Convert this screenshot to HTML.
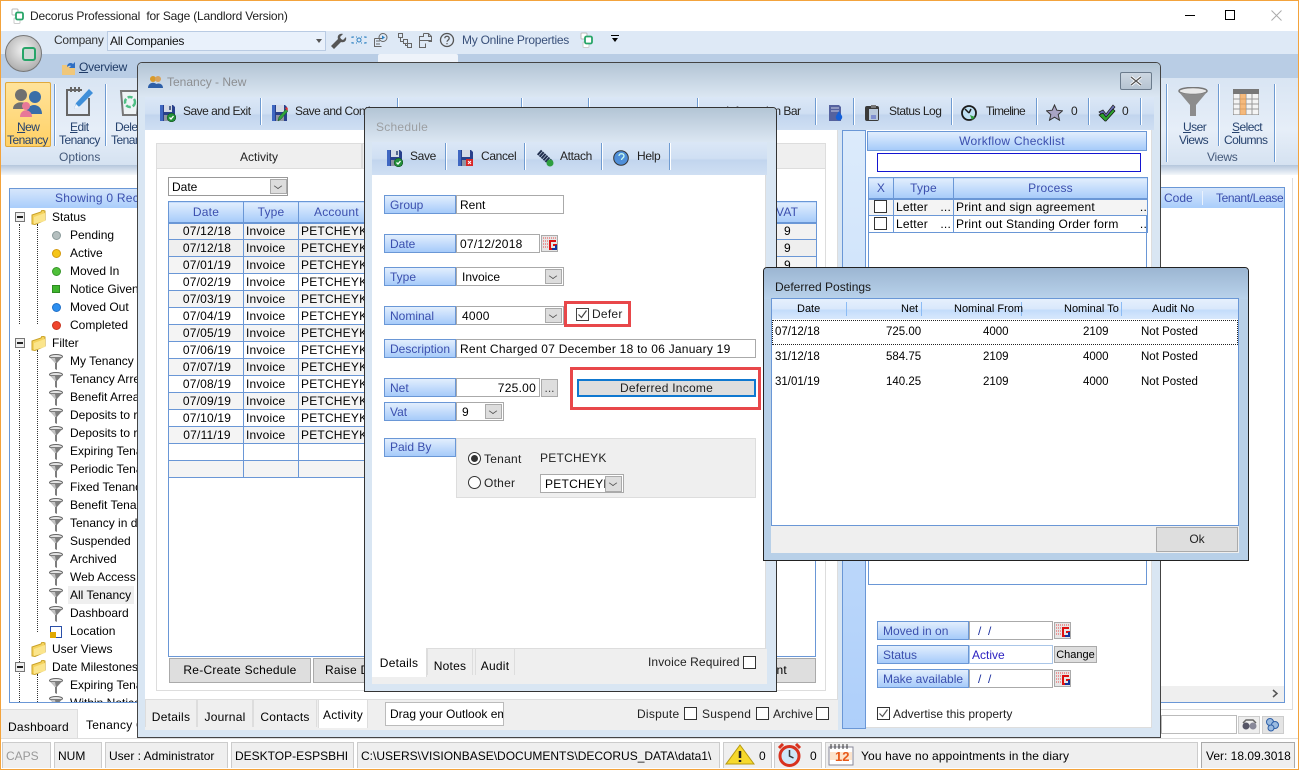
<!DOCTYPE html>
<html><head><meta charset="utf-8"><title>Decorus</title>
<style>
html,body{margin:0;padding:0;width:1299px;height:770px;overflow:hidden;background:#fff}
body{position:relative;font:12px/14px "Liberation Sans",sans-serif;color:#000}
div,span.a,svg.a,table.a{position:absolute;box-sizing:border-box}
.t{position:absolute;white-space:nowrap;line-height:14px}
.lb{position:absolute;box-sizing:border-box;height:19px;background:linear-gradient(#e2eefd,#a6cbfa);border:1px solid #6a97d6;color:#3b4fae;padding-left:5px;line-height:18px;white-space:nowrap;overflow:hidden}
.in{position:absolute;box-sizing:border-box;height:19px;background:#fff;border:1px solid #aaa;padding-left:3px;line-height:18px;white-space:nowrap;overflow:hidden}
.dd{position:absolute;box-sizing:border-box;width:17px;height:15px;background:#ddd;border:1px solid #aaa}
.dd:after{content:"";position:absolute;left:4px;top:3px;width:5px;height:5px;border-right:1px solid #555;border-bottom:1px solid #555;transform:scaleY(.7) rotate(45deg)}
.cb{position:absolute;box-sizing:border-box;width:13px;height:13px;background:#fff;border:1px solid #333}
.btn{position:absolute;box-sizing:border-box;background:#dedede;border:1px solid #aaa;text-align:center;white-space:nowrap;overflow:hidden}
.sep{position:absolute;width:1px;background:#6f9bd1;box-shadow:1px 0 0 #fff}
.tab{position:absolute;box-sizing:border-box;background:#efefef;border:1px solid #ddd;border-bottom:0;text-align:center;white-space:nowrap}
table.g{border-collapse:collapse;table-layout:fixed;font:12px/14px "Liberation Sans",sans-serif;letter-spacing:.2px}
table.g td{border:1px solid #6a97d6;height:16px;padding:0 0 0 2px;white-space:nowrap;overflow:hidden;box-sizing:border-box}
table.g th{border:1px solid #6a97d6;border-bottom-width:2px;background:linear-gradient(#e2eefd,#a6cbfa);font-weight:normal;color:#3b4fae;padding:0;box-sizing:border-box}
.s{letter-spacing:.25px}
.n{letter-spacing:0}
.tree .s{letter-spacing:0}
.q{letter-spacing:-.25px}
.r{letter-spacing:-.55px}
.b{letter-spacing:-.5px}
.c{letter-spacing:-.35px}
</style></head><body>
<svg width="0" height="0" style="position:absolute"><defs>
<symbol id="fun" viewBox="0 0 14 16"><ellipse cx="7" cy="2.5" rx="6.5" ry="2" fill="#e4e4e4" stroke="#666"/><path d="M.7 3 6 9v6l2 1V9l5.3-6z" fill="#7d7d7d"/><path d="M2 4h4l1 5H6z" fill="#c4c4c4"/></symbol>
<symbol id="fol" viewBox="0 0 15 15"><path d="M1 5l9-3 1-2 3 1v9l-10 4.5L1 14z" fill="#f5d35e" stroke="#c9a227"/><path d="M3 7l11-4v8L3 14z" fill="#fbe58c"/></symbol>
<symbol id="log" viewBox="0 0 15 16"><rect x="1" y="1" width="6" height="6" rx="1" fill="#fff" stroke="#bbb"/><rect x="3" y="10" width="6" height="5.500" rx="1" fill="#fff" stroke="#ccc"/><rect x="5" y="4.500" width="7" height="7" rx="1.500" fill="#fff" stroke="#27a568" stroke-width="1.800"/></symbol>
<symbol id="flo" viewBox="0 0 16 18"><path d="M0 1h13l2 2v14H0z" fill="#28408c"/><rect x="0" y="1" width="3" height="16" fill="#3f67c2"/><rect x="4" y="1" width="8" height="7" fill="#d4dae6"/><rect x="9" y="2" width="2" height="4" fill="#55678f"/><rect x="4" y="11" width="8" height="6" fill="#8f95a3"/><circle cx="11.500" cy="13.500" r="4.300" fill="#23903a" stroke="#14511f" stroke-width=".6"/><path d="M9.500 13.500l1.500 1.500 2.500-3" fill="none" stroke="#fff" stroke-width="1.300"/></symbol>
<symbol id="flp" viewBox="0 0 16 18"><path d="M0 1h13l2 2v14H0z" fill="#28408c"/><rect x="0" y="1" width="3" height="16" fill="#3f67c2"/><rect x="4" y="1" width="8" height="7" fill="#d4dae6"/><rect x="4" y="11" width="8" height="6" fill="#8f95a3"/><path d="M6 17l1-4 7-8 2 2-7 8z" fill="#2ea33c" stroke="#14511f" stroke-width=".5"/><path d="M13 4l2-1 1 2-1 2z" fill="#d33"/></symbol>
<symbol id="flx" viewBox="0 0 16 18"><path d="M0 1h13l2 2v14H0z" fill="#28408c"/><rect x="0" y="1" width="3" height="16" fill="#3f67c2"/><rect x="4" y="1" width="8" height="7" fill="#d4dae6"/><rect x="4" y="11" width="8" height="6" fill="#8f95a3"/><rect x="8" y="10" width="7" height="7" fill="#d92626"/><path d="M10 12l3 3m0-3l-3 3" stroke="#fff"/></symbol>
<symbol id="cal" viewBox="0 0 17 17"><rect x=".5" y=".5" width="16" height="16" fill="#e6e6e6" stroke="#aaa"/><path d="M2 3h13M2 6h6M2 9h5M2 12h5" stroke="#e44" stroke-dasharray="1 1"/><path d="M15 6H9v8h6v-4h-3" fill="none" stroke="#d11" stroke-width="2"/><path d="M11 14h4V10" fill="none" stroke="#13359c" stroke-width="2"/></symbol>
</defs></svg>

<!-- app chrome -->
<div style="left:0;top:0;width:1299px;height:770px;border:1px solid #f3a33c"></div>
<svg class="a" style="left:11px;top:8px" width="15" height="16"><use href="#log"/></svg>
<span class="t" style="left:30px;top:9px;color:#222;letter-spacing:-.2px">Decorus Professional&nbsp; for Sage (Landlord Version)</span>
<div style="left:1185px;top:15px;width:10px;height:1px;background:#000"></div>
<div style="left:1225px;top:10px;width:10px;height:10px;border:1px solid #000"></div>
<svg class="a" style="left:1271px;top:10px" width="11" height="11"><path d="M.5.5l10 10m0-10l-10 10" stroke="#aaa"/></svg>

<div style="left:1px;top:31px;width:1297px;height:23px;background:#dee9f6"></div>
<div style="left:1px;top:54px;width:1297px;height:24px;background:#b9cde5"></div>
<div style="left:1px;top:78px;width:1297px;height:87px;background:linear-gradient(#d9e5f3,#e6eef8 60%,#d5e2f1)"></div>
<div style="left:1px;top:165px;width:1297px;height:10px;background:linear-gradient(#b4c6dc,#f4f7fb)"></div>
<div style="left:378px;top:54px;width:80px;height:10px;background:#eef3fa;border-radius:2px 2px 0 0"></div>

<div style="left:5px;top:35px;width:37px;height:37px;border-radius:50%;background:radial-gradient(circle at 50% 40%,#f2f2f2,#b5b5b5 70%,#888);border:1px solid #777"></div>
<div style="left:22px;top:47px;width:14px;height:14px;border:2.500px solid #27a568;border-radius:3px;background:#cfd8d4"></div>
<span class="t q" style="left:54px;top:33px;color:#333">Company</span>
<div class="q" style="left:107px;top:31px;width:219px;height:20px;background:#e9f1fb;border:1px solid #b9cbe3;line-height:18px;padding-left:2px;color:#111">All Companies</div>
<div style="left:316px;top:39px;width:0;height:0;border:3px solid transparent;border-top:4px solid #555"></div>
<svg class="a" style="left:330px;top:32px" width="126" height="18" fill="none" stroke="#666"><path d="M1 14l7-7c-1-3 1-6 5-5l-3 3 1 2 2 1 3-3c1 4-2 6-5 5l-7 7z" fill="#555" stroke="none"/><path d="M22 6v-1h2M22 10v1h2M36 6v-1h-2M36 10v1h-2" stroke="#2a7fc0"/><circle cx="29" cy="8" r="2" stroke="#2a7fc0"/><path d="M26 5h1m4 0h1M26 11h1m4 0h1" stroke="#2a7fc0"/><path d="M44.500 6.500h8M44.500 6.500v8h7M46 9h4M46 12h4"/><circle cx="53" cy="5.500" r="4"/><path d="M52 3.500l3 2-3 2" fill="#2a7fc0" stroke="none"/><path d="M68.500 1.500h4v4h-4zM73.500 7.500h4v4h-4zM77.500 11.500h4v4h-4zM70.500 5.500v4h3M75.500 11.500v2h2"/><path d="M93.500 1.500h5l3 3v5h-3M93.500 1.500v3h-4v11h6v-4M89.500 8.500h12M98.500 1.500v3h3"/><circle cx="117" cy="8" r="6.500" stroke="#555" stroke-width="1.300"/><path d="M114.800 6.300c0-2.700 4.400-2.700 4.400 0 0 1.800-2.200 1.800-2.200 3.500m0 1.300v1.200" stroke="#555" stroke-width="1.300"/></svg>
<span class="t q" style="left:462px;top:33px;color:#39507a">My Online Properties</span>
<svg class="a" style="left:580px;top:32px" width="15" height="16"><use href="#log"/></svg>
<div style="left:611px;top:35px;width:8px;height:1px;background:#000"></div>
<div style="left:612px;top:38px;width:0;height:0;border:3px solid transparent;border-top:4px solid #000"></div>

<svg class="a" style="left:61px;top:60px" width="15" height="15"><path d="M1 5h5l2 2h6v8H1z" fill="#f0c77a"/><path d="M6 7c0-4 4-5 6-3l2-2v6H8l2-2c-1-1-3 0-4 1z" fill="#2f6fc4"/></svg>
<span class="t q" style="left:79px;top:60px;color:#1e3a66"><u>O</u>verview</span>

<!-- ribbon options -->
<div style="left:5px;top:82px;width:46px;height:65px;background:linear-gradient(#ffe39b,#ffd166);border:1px solid #e0a93c;border-radius:2px"></div>
<svg class="a" style="left:12px;top:86px" width="32" height="32"><circle cx="9" cy="9" r="6" fill="#707070"/><path d="M1 23c0-9 16-9 16 0z" fill="#707070"/><circle cx="23" cy="11" r="6" fill="#3a6ea8"/><path d="M14 28c0-12 16-12 16 0z" fill="#3a6ea8"/><circle cx="14" cy="20" r="4" fill="#e87898"/><path d="M8 31c0-9 12-9 12 0z" fill="#e87898"/></svg>
<span class="t r" style="left:17px;top:120px;color:#26426e"><u>N</u>ew</span>
<span class="t r" style="left:7px;top:133px;color:#26426e">Tenancy</span>
<svg class="a" style="left:65px;top:86px" width="30" height="32"><path d="M17 4H2v25h22V12" fill="none" stroke="#666" stroke-width="2"/><path d="M6 1v5M10 1v5M14 1v5" stroke="#666" stroke-width="2"/><path d="M9 23l2-6L24 3l4 4-13 13z" fill="#3f8fd9"/><path d="M9 23l2-5 3 3z" fill="#f0f4fa"/></svg>
<span class="t r" style="left:70px;top:120px;color:#26426e"><u>E</u>dit</span>
<span class="t r" style="left:59px;top:133px;color:#26426e">Tenancy</span>
<div class="sep" style="left:54px;top:84px;height:62px"></div>
<div class="sep" style="left:105px;top:84px;height:62px"></div>
<svg class="a" style="left:119px;top:88px" width="22" height="30"><path d="M2 3h18l-2 24H4z" fill="#eef3f5" stroke="#777" stroke-width="2"/><circle cx="11" cy="14" r="5" fill="none" stroke="#4fbf85" stroke-width="2.500" stroke-dasharray="5 2"/></svg>
<span class="t r" style="left:115px;top:120px;color:#26426e">Dele</span>
<span class="t r" style="left:111px;top:133px;color:#26426e">Tenan</span>
<span class="t n" style="left:59px;top:150px;color:#44597a">Options</span>

<div class="sep" style="left:1166px;top:84px;height:78px"></div>
<svg class="a" style="left:1178px;top:87px" width="30" height="30"><ellipse cx="15" cy="4" rx="14" ry="3.500" fill="#e8e8e8" stroke="#777" stroke-width="1.500"/><path d="M1 5l11 13v11h6V18L29 5c-6 3-22 3-28 0z" fill="#8c8c8c"/></svg>
<span class="t r" style="left:1183px;top:120px;color:#26426e"><u>U</u>ser</span>
<span class="t r" style="left:1179px;top:133px;color:#26426e">Views</span>
<div class="sep" style="left:1218px;top:84px;height:62px"></div>
<svg class="a" style="left:1233px;top:89px" width="26" height="26"><rect width="26" height="26" fill="#f4f4f4" stroke="#777"/><rect width="26" height="5" fill="#777"/><path d="M7 5v21M13 5v21M19 5v21M0 10h26M0 15h26M0 20h26" stroke="#999"/><rect x="7" y="5" width="6" height="21" fill="#f5a14a" opacity=".7"/></svg>
<span class="t r" style="left:1232px;top:120px;color:#26426e"><u>S</u>elect</span>
<span class="t r" style="left:1224px;top:133px;color:#26426e">Columns</span>
<span class="t q" style="left:1207px;top:150px;color:#44597a">Views</span>
<div class="sep" style="left:1274px;top:84px;height:78px"></div>

<!-- background tree -->
<div class="tree" style="left:9px;top:188px;width:129px;height:515px;border:1px solid #6a97d6;background:#fff;overflow:hidden">
<div style="left:0;top:0;width:127px;height:19px;background:linear-gradient(#d6e6fb,#a9cdfb)"></div>
<span class="t" style="left:45px;top:2px;color:#3b4fae;letter-spacing:.25px">Showing 0 Records</span>
<div style="left:-10px;top:-189px;width:146px;height:710px">
<div style="left:19px;top:224px;width:0;height:100px;border-left:1px dotted #333"></div>
<div style="left:37px;top:224px;width:0;height:100px;border-left:1px dotted #333"></div>
<div style="left:37px;top:350px;width:0;height:282px;border-left:1px dotted #333"></div>
<div style="left:19px;top:350px;width:0;height:360px;border-left:1px dotted #333"></div>
<div style="left:37px;top:674px;width:0;height:30px;border-left:1px dotted #333"></div>

<div style="left:15px;top:212px;width:10px;height:10px;border:1px solid #777;background:#eee"><div style="left:1px;top:3px;width:6px;height:2px;background:#222"></div></div>
<svg class="a" style="left:31px;top:210px" width="15" height="15"><use href="#fol"/></svg><span class="t s" style="left:52px;top:210px">Status</span>
<div style="left:52px;top:231px;width:9px;height:9px;border-radius:50%;background:#b5bfbf;border:1px solid #8a9a9a"></div><span class="t s" style="left:70px;top:228px">Pending</span>
<div style="left:52px;top:249px;width:9px;height:9px;border-radius:50%;background:#f5c518;border:1px solid #d49a10"></div><span class="t s" style="left:70px;top:246px">Active</span>
<div style="left:52px;top:267px;width:9px;height:9px;border-radius:50%;background:#4fc03a;border:1px solid #38962a"></div><span class="t s" style="left:70px;top:264px">Moved In</span>
<div style="left:52px;top:285px;width:8px;height:8px;background:#3fb52d;border:1px solid #2d8a20"></div><span class="t s" style="left:70px;top:282px">Notice Given</span>
<div style="left:52px;top:303px;width:9px;height:9px;border-radius:50%;background:#2d8ff0;border:1px solid #2070c8"></div><span class="t s" style="left:70px;top:300px">Moved Out</span>
<div style="left:52px;top:321px;width:9px;height:9px;border-radius:50%;background:#f0452d;border:1px solid #c83520"></div><span class="t s" style="left:70px;top:318px">Completed</span>

<div style="left:15px;top:338px;width:10px;height:10px;border:1px solid #777;background:#eee"><div style="left:1px;top:3px;width:6px;height:2px;background:#222"></div></div>
<svg class="a" style="left:31px;top:336px" width="15" height="15"><use href="#fol"/></svg><span class="t s" style="left:52px;top:336px">Filter</span>

<svg class="a" style="left:49px;top:354px" width="14" height="16"><use href="#fun"/></svg><span class="t s" style="left:70px;top:354px">My Tenancy</span>
<svg class="a" style="left:49px;top:372px" width="14" height="16"><use href="#fun"/></svg><span class="t s" style="left:70px;top:372px">Tenancy Arrears</span>
<svg class="a" style="left:49px;top:390px" width="14" height="16"><use href="#fun"/></svg><span class="t s" style="left:70px;top:390px">Benefit Arrears</span>
<svg class="a" style="left:49px;top:408px" width="14" height="16"><use href="#fun"/></svg><span class="t s" style="left:70px;top:408px">Deposits to register</span>
<svg class="a" style="left:49px;top:426px" width="14" height="16"><use href="#fun"/></svg><span class="t s" style="left:70px;top:426px">Deposits to renew</span>
<svg class="a" style="left:49px;top:444px" width="14" height="16"><use href="#fun"/></svg><span class="t s" style="left:70px;top:444px">Expiring Tenancy</span>
<svg class="a" style="left:49px;top:462px" width="14" height="16"><use href="#fun"/></svg><span class="t s" style="left:70px;top:462px">Periodic Tenancy</span>
<svg class="a" style="left:49px;top:480px" width="14" height="16"><use href="#fun"/></svg><span class="t s" style="left:70px;top:480px">Fixed Tenancy</span>
<svg class="a" style="left:49px;top:498px" width="14" height="16"><use href="#fun"/></svg><span class="t s" style="left:70px;top:498px">Benefit Tenancy</span>
<svg class="a" style="left:49px;top:516px" width="14" height="16"><use href="#fun"/></svg><span class="t s" style="left:70px;top:516px">Tenancy in dispute</span>
<svg class="a" style="left:49px;top:534px" width="14" height="16"><use href="#fun"/></svg><span class="t s" style="left:70px;top:534px">Suspended</span>
<svg class="a" style="left:49px;top:552px" width="14" height="16"><use href="#fun"/></svg><span class="t s" style="left:70px;top:552px">Archived</span>
<svg class="a" style="left:49px;top:570px" width="14" height="16"><use href="#fun"/></svg><span class="t s" style="left:70px;top:570px">Web Access</span>
<div style="left:68px;top:586px;width:66px;height:18px;background:#efefef"></div>
<svg class="a" style="left:49px;top:588px" width="14" height="16"><use href="#fun"/></svg><span class="t s" style="left:70px;top:588px">All Tenancy</span>
<svg class="a" style="left:49px;top:606px" width="14" height="16"><use href="#fun"/></svg><span class="t s" style="left:70px;top:606px">Dashboard</span>
<div style="left:50px;top:626px;width:12px;height:12px;border:1px solid #2a4fa8"></div><div style="left:50px;top:632px;width:6px;height:6px;background:#e0a800"></div><span class="t s" style="left:70px;top:624px">Location</span>
<svg class="a" style="left:31px;top:642px" width="15" height="15"><use href="#fol"/></svg><span class="t s" style="left:52px;top:642px">User Views</span>
<div style="left:15px;top:662px;width:10px;height:10px;border:1px solid #777;background:#eee"><div style="left:1px;top:3px;width:6px;height:2px;background:#222"></div></div>
<svg class="a" style="left:31px;top:660px" width="15" height="15"><use href="#fol"/></svg><span class="t s" style="left:52px;top:660px">Date Milestones</span>
<svg class="a" style="left:49px;top:678px" width="14" height="16"><use href="#fun"/></svg><span class="t s" style="left:70px;top:678px">Expiring Tenancy</span>
<svg class="a" style="left:49px;top:696px" width="14" height="16"><use href="#fun"/></svg><span class="t s" style="left:70px;top:696px">Within Notice</span>
</div></div>

<!-- background right grid -->
<div style="left:1161px;top:178px;width:132px;height:532px;border-right:1px solid #ddd;border-bottom:1px solid #ddd"></div>
<div style="left:1161px;top:187px;width:124px;height:516px;border:1px solid #6a97d6;border-left:0;background:#fff"></div>
<div style="left:1161px;top:188px;width:123px;height:20px;background:linear-gradient(#d6e6fb,#a9cdfb)"></div>
<span class="t" style="left:1164px;top:191px;color:#3b4fae">Code</span>
<div style="left:1202px;top:191px;width:1px;height:14px;background:#eaf2fd"></div>
<span class="t" style="left:1216px;top:191px;color:#3b4fae;letter-spacing:-.4px">Tenant/Lease</span>
<div style="left:1161px;top:686px;width:123px;height:16px;background:#efefef"></div>
<svg class="a" style="left:1272px;top:689px" width="7" height="9"><path d="M1 1l4 3.500-4 3.500" fill="none" stroke="#555" stroke-width="1.500"/></svg>
<div style="left:1161px;top:715px;width:76px;height:19px;background:#fff;border:1px solid #bbb"></div>
<div style="left:1238px;top:716px;width:22px;height:18px;background:#eee;border:1px solid #ccc"></div>
<svg class="a" style="left:1241px;top:719px" width="17" height="12"><circle cx="5" cy="7" r="3.500" fill="#556"/><circle cx="12" cy="7" r="3.500" fill="#889"/><path d="M2 4l3-3h7l3 3" fill="none" stroke="#666" stroke-width="1.500"/></svg>
<div style="left:1262px;top:716px;width:22px;height:18px;background:#e4e4e4;border:1px solid #ccc"></div>
<svg class="a" style="left:1264px;top:717px" width="18" height="16"><circle cx="6" cy="5" r="3.500" fill="#9bbbe0" stroke="#2d5fa8"/><circle cx="11" cy="8" r="3.500" fill="#9bbbe0" stroke="#2d5fa8"/><circle cx="7" cy="11" r="3" fill="#9bbbe0" stroke="#2d5fa8"/></svg>

<!-- app tabs -->
<div style="left:1px;top:709px;width:77px;height:30px;background:#efefef;border-top:1px solid #ddd;border-right:1px solid #ddd"></div>
<span class="t s" style="left:8px;top:720px">Dashboard</span>
<span class="t s" style="left:86px;top:718px">Tenancy Centre</span>
<div style="left:1px;top:738px;width:1297px;height:1px;background:#ddd"></div>

<!-- status bar -->
<div style="left:1px;top:740px;width:1297px;height:28px;background:#fff"></div>
<div style="left:2px;top:742px;width:49px;height:26px;background:#efefef;border:1px solid #ccc;border-bottom:0;color:#999;padding:6px 0 0 3px">CAPS</div>
<div style="left:54px;top:742px;width:48px;height:26px;background:#efefef;border:1px solid #ccc;border-bottom:0;padding:6px 0 0 3px">NUM</div>
<div style="left:105px;top:742px;width:123px;height:26px;background:#efefef;border:1px solid #ccc;border-bottom:0;padding:6px 0 0 3px">User : Administrator</div>
<div style="left:231px;top:742px;width:123px;height:26px;background:#efefef;border:1px solid #ccc;border-bottom:0;padding:6px 0 0 3px">DESKTOP-ESPSBHI</div>
<div style="left:357px;top:742px;width:363px;height:26px;background:#efefef;border:1px solid #ccc;border-bottom:0;padding:6px 0 0 3px;white-space:nowrap;overflow:hidden">C:\USERS\VISIONBASE\DOCUMENTS\DECORUS_DATA\data1\</div>
<div style="left:723px;top:742px;width:49px;height:26px;background:#efefef;border:1px solid #ccc;border-bottom:0"></div>
<svg class="a" style="left:725px;top:744px" width="30" height="22"><path d="M15 1L29 20H1z" fill="#f6d92c" stroke="#b79a10"/><path d="M15 7v7m0 2v2" stroke="#222" stroke-width="2.500"/></svg>
<span class="t" style="left:759px;top:749px">0</span>
<div style="left:774px;top:742px;width:48px;height:26px;background:#efefef;border:1px solid #ccc;border-bottom:0"></div>
<svg class="a" style="left:777px;top:743px" width="25" height="24"><circle cx="12.500" cy="13" r="9.500" fill="#cfe6f7" stroke="#d8321f" stroke-width="3"/><path d="M2 5l4-4M23 5l-4-4" stroke="#d8321f" stroke-width="3"/><path d="M12.500 7v6l4 2" fill="none" stroke="#333" stroke-width="1.500"/></svg>
<span class="t" style="left:810px;top:749px">0</span>
<div style="left:825px;top:742px;width:373px;height:26px;background:#efefef;border:1px solid #ccc;border-bottom:0"></div>
<svg class="a" style="left:828px;top:744px" width="27" height="22"><rect x="1" y="3" width="24" height="18" fill="#fff" stroke="#889"/><path d="M3 0v5m4-5v5m4-5v5m4-5v5m4-5v5" stroke="#333"/><rect x="2" y="8" width="22" height="8" fill="#fde4cc"/><text x="7" y="17" font-size="13" font-weight="bold" font-family="Liberation Sans" fill="#e8591a">12</text></svg>
<span class="t" style="left:861px;top:749px;letter-spacing:.12px">You have no appointments in the diary</span>
<div style="left:1201px;top:742px;width:94px;height:26px;background:#efefef;border:1px solid #aaa;border-bottom:0;padding:6px 0 0 4px;white-space:nowrap;overflow:hidden">Ver: 18.09.3018</div>

<!-- Tenancy window -->
<div style="left:137px;top:62px;width:1024px;height:676px;background:#d9e6f3;border:1px solid #444;border-radius:5px 5px 0 0"></div>
<div style="left:138px;top:63px;width:1022px;height:34px;background:linear-gradient(#b3c5d5,#dbe6f2);border-radius:4px 4px 0 0"></div>
<svg class="a" style="left:148px;top:75px" width="15" height="14"><circle cx="5" cy="4" r="3" fill="#d89a2a"/><circle cx="10" cy="4" r="3" fill="#d8a25a"/><path d="M0 13c0-7 10-7 10 0zM6 13c0-6 9-6 9 0z" fill="#2d5fa8"/></svg>
<span class="t n" style="left:167px;top:75px;color:#8d8f92">Tenancy - New</span>
<div style="left:1120px;top:72px;width:32px;height:18px;background:linear-gradient(#cdd7e2,#b6c4d2);border:1px solid #6b7b8c;border-radius:2px"></div>
<svg class="a" style="left:1130px;top:76px" width="12" height="10"><path d="M1 1l10 8m0-8L1 9" stroke="#fff" stroke-width="3"/><path d="M1 1l10 8m0-8L1 9" stroke="#555" stroke-width="1.300"/></svg>
<div style="left:145px;top:97px;width:1009px;height:33px;background:linear-gradient(#dbe7f6,#cfdff3 50%,#c2d5ee 55%,#cfdff3)"></div>
<div class="sep" style="left:260px;top:98px;height:27px"></div><div class="sep" style="left:397px;top:98px;height:27px"></div><div class="sep" style="left:521px;top:98px;height:27px"></div><div class="sep" style="left:588px;top:98px;height:27px"></div><div class="sep" style="left:697px;top:98px;height:27px"></div><div class="sep" style="left:815px;top:98px;height:27px"></div><div class="sep" style="left:853px;top:98px;height:27px"></div><div class="sep" style="left:951px;top:98px;height:27px"></div><div class="sep" style="left:1036px;top:98px;height:27px"></div><div class="sep" style="left:1088px;top:98px;height:27px"></div><div class="sep" style="left:1140px;top:98px;height:27px"></div>
<svg class="a" style="left:160px;top:104px" width="16" height="18"><use href="#flo"/></svg>
<span class="t b" style="left:183px;top:104px;color:#222">Save and Exit</span>
<svg class="a" style="left:272px;top:104px" width="16" height="18"><use href="#flp"/></svg>
<span class="t b" style="left:295px;top:104px;color:#222">Save and Continue</span>
<span class="t b" style="left:726px;top:104px;color:#222">Information Bar</span>
<svg class="a" style="left:828px;top:104px" width="16" height="18"><path d="M1 1h10l2 2v14H1z" fill="#55629f"/><path d="M3 4h8M3 7h8" stroke="#c8cce0"/><path d="M11 7l3 5a3.200 3.200 0 1 1-6 0z" fill="#1560d8"/></svg>
<svg class="a" style="left:864px;top:104px" width="17" height="18"><rect x="1" y="2" width="14" height="15" rx="2" fill="#3a3a3a"/><rect x="5" y="5" width="9" height="11" fill="#b9c9dc"/><rect x="7" y="1" width="5" height="3" fill="#777"/><path d="M7 11h5v4H7z" fill="#7f8fd0"/></svg>
<span class="t b" style="left:889px;top:104px;color:#222">Status Log</span>
<svg class="a" style="left:961px;top:104px" width="17" height="18"><circle cx="8" cy="9" r="7" fill="#bfe0f3" stroke="#1a1a1a" stroke-width="1.800"/><path d="M4 5l4 4" stroke="#1a1a1a" stroke-width="1.500"/><path d="M8 9l2-4" stroke="#1a1a1a" stroke-width="1.500"/><path d="M9 11l5 2-3 3z" fill="#2e9e3f"/></svg>
<span class="t" style="left:986px;top:104px;color:#222;letter-spacing:-.75px">Timeline</span>
<svg class="a" style="left:1046px;top:104px" width="17" height="17"><path d="M8.500 1l2.300 5.200 5.700.6-4.300 3.800 1.300 5.600-5-3-5 3 1.300-5.600L.5 6.800l5.700-.6z" fill="#a9a4c4" stroke="#333"/></svg>
<span class="t" style="left:1071px;top:104px;color:#222">0</span>
<svg class="a" style="left:1098px;top:104px" width="18" height="18"><path d="M1 8l4-2 3 4 7-9 2 2-9 11H7z" fill="#6a6fb5" stroke="#222" stroke-width=".7"/><path d="M1 11l4-2 3 4 7-8 2 2-9 10H7z" fill="#2ea32e" stroke="#111" stroke-width=".7"/></svg>
<span class="t" style="left:1122px;top:104px;color:#222">0</span>

<div style="left:145px;top:130px;width:693px;height:570px;background:#fff;border-right:1px solid #ddd;border-bottom:1px solid #ddd"></div>
<div style="left:156px;top:143px;width:670px;height:548px;border:1px solid #ddd;background:#fff"></div>
<div class="tab" style="left:156px;top:143px;width:206px;height:26px;border-bottom:1px solid #ddd;line-height:26px;color:#222">Activity</div>
<div style="left:362px;top:143px;width:464px;height:26px;background:#efefef;border:1px solid #ddd"></div>
<div class="in" style="left:168px;top:177px;width:120px;height:19px;border-color:#999">Date</div><div class="dd" style="left:270px;top:179px"></div>

<div style="left:168px;top:201px;width:648px;height:456px;border:1px solid #6a97d6;background:#fff"></div>
<table class="g a" style="left:168px;top:201px;width:220px"><colgroup><col style="width:75px"><col style="width:55px"><col style="width:90px"></colgroup>
<tr style="height:21px"><th>Date</th><th>Type</th><th style="text-align:left;padding-left:15px">Account</th></tr>
<tr style="background:#f2f2f2;height:17px"><td style="text-align:center">07/12/18</td><td>Invoice</td><td>PETCHEYK</td></tr>
<tr style="background:#efefef;height:17px"><td style="text-align:center">07/12/18</td><td>Invoice</td><td>PETCHEYK</td></tr>
<tr style="background:#f4f4f4;height:17px"><td style="text-align:center">07/01/19</td><td>Invoice</td><td>PETCHEYK</td></tr>
<tr style="height:17px"><td style="text-align:center">07/02/19</td><td>Invoice</td><td>PETCHEYK</td></tr>
<tr style="background:#f4f4f4;height:17px"><td style="text-align:center">07/03/19</td><td>Invoice</td><td>PETCHEYK</td></tr>
<tr style="height:17px"><td style="text-align:center">07/04/19</td><td>Invoice</td><td>PETCHEYK</td></tr>
<tr style="background:#f4f4f4;height:17px"><td style="text-align:center">07/05/19</td><td>Invoice</td><td>PETCHEYK</td></tr>
<tr style="height:17px"><td style="text-align:center">07/06/19</td><td>Invoice</td><td>PETCHEYK</td></tr>
<tr style="background:#f4f4f4;height:17px"><td style="text-align:center">07/07/19</td><td>Invoice</td><td>PETCHEYK</td></tr>
<tr style="height:17px"><td style="text-align:center">07/08/19</td><td>Invoice</td><td>PETCHEYK</td></tr>
<tr style="background:#f4f4f4;height:17px"><td style="text-align:center">07/09/19</td><td>Invoice</td><td>PETCHEYK</td></tr>
<tr style="height:17px"><td style="text-align:center">07/10/19</td><td>Invoice</td><td>PETCHEYK</td></tr>
<tr style="background:#f4f4f4;height:17px"><td style="text-align:center">07/11/19</td><td>Invoice</td><td>PETCHEYK</td></tr>
<tr style="height:17px"><td></td><td></td><td></td></tr>
<tr style="background:#f4f4f4;height:17px"><td></td><td></td><td></td></tr>
</table>
<table class="g a" style="left:769px;top:201px;width:47px"><colgroup><col style="width:47px"></colgroup>
<tr style="height:21px"><th style="text-align:left;padding-left:6px">VAT</th></tr>
<tr style="background:#f2f2f2;height:17px"><td style="padding-left:14px">9</td></tr>
<tr style="background:#efefef;height:17px"><td style="padding-left:14px">9</td></tr>
<tr style="background:#f4f4f4;height:17px"><td style="padding-left:14px">9</td></tr>
</table>
<div class="btn s" style="left:169px;top:658px;width:142px;height:25px;line-height:23px">Re-Create Schedule</div>
<div class="btn s" style="left:313px;top:658px;width:140px;height:25px;line-height:23px;text-align:left;padding-left:11px">Raise Deposit</div>
<div class="btn s" style="left:700px;top:658px;width:116px;height:25px;line-height:23px;text-align:right;padding-right:28px">Statement</div>

<div style="left:145px;top:700px;width:693px;height:30px;background:#efefef"></div>
<div class="tab s" style="left:145px;top:699px;width:52px;height:28px;padding-top:10px">Details</div>
<div class="tab s" style="left:197px;top:699px;width:56px;height:28px;padding-top:10px">Journal</div>
<div class="tab s" style="left:253px;top:699px;width:64px;height:28px;padding-top:10px">Contacts</div>
<div class="tab s" style="left:318px;top:699px;width:50px;height:29px;background:#fff;padding-top:8px">Activity</div>
<div class="in" style="left:385px;top:702px;width:119px;height:24px;padding:0 0 0 4px;line-height:22px;border-color:#bbb">Drag your Outlook em</div>
<span class="t s" style="left:637px;top:707px;color:#222">Dispute</span><div class="cb" style="left:684px;top:707px"></div>
<span class="t s" style="left:702px;top:707px;color:#222">Suspend</span><div class="cb" style="left:756px;top:707px"></div>
<span class="t n" style="left:773px;top:707px;color:#222">Archive</span><div class="cb" style="left:816px;top:707px"></div>

<div style="left:842px;top:130px;width:24px;height:599px;background:linear-gradient(#dcebfb,#aecffa);border:1px solid #6a97d6"></div>
<div style="left:866px;top:130px;width:286px;height:598px;background:#fff;border-right:1px solid #ddd;border-bottom:1px solid #ddd"></div>
<div class="lb" style="left:867px;top:131px;width:280px;height:20px;text-align:center;padding:0 0 0 10px;line-height:19px;letter-spacing:.25px">Workflow Checklist</div>
<div style="left:877px;top:153px;width:264px;height:19px;background:#fff;border:1px solid #1515d0"></div>
<div style="left:868px;top:177px;width:279px;height:408px;border:1px solid #6a97d6;background:#fff"></div>
<table class="g a" style="left:868px;top:177px;width:279px"><colgroup><col style="width:25px"><col style="width:60px"><col style="width:194px"></colgroup>
<tr style="height:21px"><th>X</th><th>Type</th><th>Process</th></tr>
<tr style="background:#f4f4f4;height:17px"><td></td><td>Letter<span style="float:right;margin-right:2px">...</span></td><td>Print and sign agreement<span style="float:right">..</span></td></tr>
<tr style="height:17px"><td></td><td>Letter<span style="float:right;margin-right:2px">...</span></td><td>Print out Standing Order form<span style="float:right">..</span></td></tr>
</table>
<div class="cb" style="left:874px;top:200px"></div><div class="cb" style="left:874px;top:217px"></div>

<div class="lb" style="left:877px;top:621px;width:92px">Moved in on</div><div class="in" style="left:969px;top:621px;width:84px;color:#1b2e9e;padding-left:8px">/ &nbsp;/</div>
<svg class="a" style="left:1054px;top:622px" width="17" height="17"><use href="#cal"/></svg>
<div class="lb" style="left:877px;top:645px;width:92px">Status</div><div class="in" style="left:969px;top:645px;width:84px;color:#2a1fc0;border-color:#aac6e8;padding-left:2px">Active</div>
<div class="btn" style="left:1054px;top:646px;width:43px;height:17px;line-height:17px;font-size:11px">Change</div>
<div class="lb" style="left:877px;top:669px;width:92px">Make available</div><div class="in" style="left:969px;top:669px;width:84px;color:#1b2e9e;padding-left:8px">/ &nbsp;/</div>
<svg class="a" style="left:1054px;top:670px" width="17" height="17"><use href="#cal"/></svg>
<div class="cb" style="left:877px;top:707px"></div>
<svg class="a" style="left:878px;top:708px" width="11" height="11"><path d="M1.500 5.500l3 3 5-7" fill="none" stroke="#555" stroke-width="1.200"/></svg>
<span class="t n" style="left:893px;top:707px;color:#222">Advertise this property</span>

<!-- Schedule window -->
<div style="left:364px;top:107px;width:413px;height:585px;background:#d9e6f3;border:1px solid #333;border-radius:4px 4px 0 0"></div>
<div style="left:365px;top:108px;width:411px;height:34px;background:linear-gradient(#b3c5d5,#dbe6f2);border-radius:3px 3px 0 0"></div>
<span class="t s" style="left:376px;top:120px;color:#9c9fa2">Schedule</span>
<div style="left:372px;top:142px;width:395px;height:33px;background:linear-gradient(#dbe7f6,#cfdff3 50%,#c2d5ee 55%,#cfdff3)"></div>
<div class="sep" style="left:445px;top:143px;height:27px"></div><div class="sep" style="left:524px;top:143px;height:27px"></div><div class="sep" style="left:601px;top:143px;height:27px"></div><div class="sep" style="left:669px;top:143px;height:27px"></div>
<svg class="a" style="left:387px;top:149px" width="16" height="18"><use href="#flo"/></svg>
<span class="t c" style="left:410px;top:149px;color:#222">Save</span>
<svg class="a" style="left:458px;top:149px" width="16" height="18"><use href="#flx"/></svg>
<span class="t c" style="left:481px;top:149px;color:#222">Cancel</span>
<svg class="a" style="left:536px;top:149px" width="18" height="18"><path d="M3 3l12 11" stroke="#22304f" stroke-width="6" stroke-dasharray="2 .6"/><circle cx="14" cy="14" r="3.500" fill="#2e9e3f"/></svg>
<span class="t c" style="left:560px;top:149px;color:#222">Attach</span>
<svg class="a" style="left:613px;top:150px" width="16" height="16"><circle cx="8" cy="8" r="7.300" fill="#4f8fd9" stroke="#333"/><path d="M6 6c0-3 5-3 5 0 0 2-2.500 2-2.500 4" fill="none" stroke="#cfe" stroke-width="1.300"/></svg>
<span class="t c" style="left:637px;top:149px;color:#222">Help</span>

<div style="left:372px;top:175px;width:394px;height:474px;background:#fff;border-right:1px solid #ddd;border-bottom:1px solid #ddd"></div>
<div style="left:372px;top:649px;width:395px;height:35px;background:#efefef"></div>

<div class="lb" style="left:384px;top:195px;width:72px">Group</div><div class="in" style="left:456px;top:195px;width:108px">Rent</div>
<div class="lb" style="left:384px;top:234px;width:72px">Date</div><div class="in s" style="left:456px;top:234px;width:84px">07/12/2018</div>
<svg class="a" style="left:541px;top:235px" width="17" height="17"><use href="#cal"/></svg>
<div class="lb" style="left:384px;top:267px;width:72px">Type</div><div class="in" style="left:456px;top:267px;width:108px;padding-left:5px">Invoice</div><div class="dd" style="left:545px;top:269px"></div>
<div class="lb" style="left:384px;top:306px;width:72px">Nominal</div><div class="in s" style="left:456px;top:306px;width:108px;padding-left:5px">4000</div><div class="dd" style="left:545px;top:308px"></div>
<div style="left:564px;top:301px;width:67px;height:26px;border:3px solid #e8474a"></div>
<div class="cb" style="left:576px;top:308px;border-color:#444"></div>
<svg class="a" style="left:577px;top:309px" width="11" height="11"><path d="M1.500 5.500l3 3 5-7" fill="none" stroke="#444" stroke-width="1.200"/></svg>
<span class="t s" style="left:592px;top:307px;color:#222">Defer</span>
<div class="lb" style="left:384px;top:339px;width:72px">Description</div><div class="in s" style="left:456px;top:339px;width:300px">Rent Charged 07 December 18 to 06 January 19</div>
<div class="lb" style="left:384px;top:378px;width:72px">Net</div><div class="in s" style="left:456px;top:378px;width:84px;text-align:right;padding-right:3px">725.00</div>
<div class="btn" style="left:541px;top:379px;width:17px;height:18px;line-height:16px;color:#444">...</div>
<div style="left:570px;top:367px;width:191px;height:43px;border:3px solid #e8474a"></div>
<div class="btn s" style="left:577px;top:379px;width:179px;height:18px;border:2px solid #0f78d0;line-height:14px;color:#222">Deferred Income</div>
<div class="lb" style="left:384px;top:402px;width:72px">Vat</div><div class="in s" style="left:456px;top:402px;width:48px;padding-left:5px">9</div><div class="dd" style="left:485px;top:404px"></div>
<div class="lb" style="left:384px;top:438px;width:72px;line-height:17px">Paid By</div>
<div style="left:456px;top:438px;width:300px;height:60px;background:#efefef;border:1px solid #ddd"></div>
<div style="left:468px;top:452px;width:13px;height:13px;border:1px solid #333;border-radius:50%;background:#fff"></div><div style="left:471px;top:455px;width:7px;height:7px;border-radius:50%;background:#333"></div>
<span class="t s" style="left:484px;top:452px;color:#222">Tenant</span>
<span class="t s" style="left:540px;top:451px;color:#222">PETCHEYK</span>
<div style="left:468px;top:476px;width:13px;height:13px;border:1px solid #333;border-radius:50%;background:#fff"></div>
<span class="t s" style="left:484px;top:476px;color:#222">Other</span>
<div class="in s" style="left:540px;top:474px;width:84px;padding-left:4px">PETCHEYK</div><div class="dd" style="left:605px;top:476px;height:16px;z-index:2"></div>

<div class="tab s" style="left:372px;top:648px;width:55px;height:29px;background:#fff;padding-top:8px;border-top:0;border-left:0">Details</div>
<div class="tab s" style="left:427px;top:648px;width:46px;height:27px;padding-top:10px">Notes</div>
<div class="tab s" style="left:475px;top:648px;width:40px;height:27px;padding-top:10px">Audit</div>
<span class="t" style="left:648px;top:655px;color:#222;letter-spacing:.1px">Invoice Required</span><div class="cb" style="left:743px;top:656px"></div>

<!-- Deferred Postings -->
<div style="left:763px;top:267px;width:486px;height:294px;background:#b8d0e8;border:1px solid #222;border-radius:4px 4px 0 0"></div>
<div style="left:764px;top:268px;width:484px;height:31px;background:linear-gradient(#9cb6d2,#b9d2eb);border-radius:3px 3px 0 0"></div>
<span class="t" style="left:775px;top:280px;color:#1a1a1a">Deferred Postings</span>
<div style="left:771px;top:298px;width:468px;height:228px;background:#fff;border:1px solid #6a97d6"></div>
<div style="left:772px;top:299px;width:466px;height:20px;background:linear-gradient(#e6f0fd,#d9e8fb 50%,#c3dcfb 55%,#d8e8fc)"></div>
<div style="left:846px;top:302px;width:1px;height:14px;background:#8cbcf5"></div>
<div style="left:921px;top:302px;width:1px;height:14px;background:#8cbcf5"></div>
<div style="left:1021px;top:302px;width:1px;height:14px;background:#8cbcf5"></div>
<div style="left:1121px;top:302px;width:1px;height:14px;background:#8cbcf5"></div>
<span class="t" style="left:797px;top:302px;font-size:11px">Date</span>
<span class="t" style="left:901px;top:302px;font-size:11px">Net</span>
<span class="t" style="left:954px;top:302px;font-size:11px">Nominal From</span>
<span class="t" style="left:1064px;top:302px;font-size:11px">Nominal To</span>
<span class="t" style="left:1152px;top:302px;font-size:11px">Audit No</span>
<div style="left:772px;top:320px;width:466px;height:25px;border:1px dotted #222"></div>
<span class="t" style="left:775px;top:325px;font-size:11.500px">07/12/18</span><span class="t" style="left:886px;top:325px;font-size:11.500px">725.00</span><span class="t" style="left:983px;top:325px;font-size:11.500px">4000</span><span class="t" style="left:1083px;top:325px;font-size:11.500px">2109</span><span class="t" style="left:1141px;top:325px;font-size:11.500px">Not Posted</span>
<span class="t" style="left:775px;top:350px;font-size:11.500px">31/12/18</span><span class="t" style="left:886px;top:350px;font-size:11.500px">584.75</span><span class="t" style="left:983px;top:350px;font-size:11.500px">2109</span><span class="t" style="left:1083px;top:350px;font-size:11.500px">4000</span><span class="t" style="left:1141px;top:350px;font-size:11.500px">Not Posted</span>
<span class="t" style="left:775px;top:375px;font-size:11.500px">31/01/19</span><span class="t" style="left:886px;top:375px;font-size:11.500px">140.25</span><span class="t" style="left:983px;top:375px;font-size:11.500px">2109</span><span class="t" style="left:1083px;top:375px;font-size:11.500px">4000</span><span class="t" style="left:1141px;top:375px;font-size:11.500px">Not Posted</span>
<div style="left:771px;top:526px;width:468px;height:27px;background:#efefef"></div>
<div class="btn" style="left:1156px;top:527px;width:82px;height:25px;line-height:23px;color:#222">Ok</div>

</body></html>
